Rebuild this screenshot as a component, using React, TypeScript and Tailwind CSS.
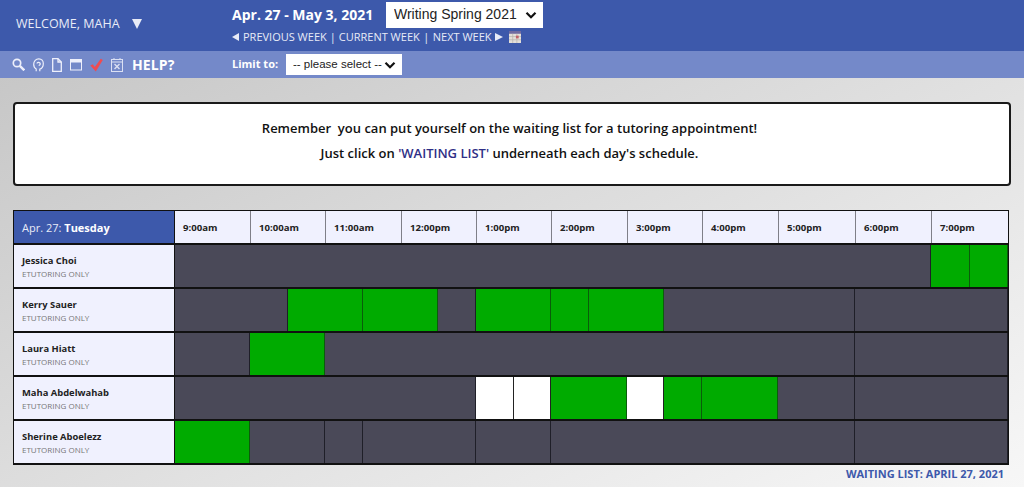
const F = "font-['Open_Sans',sans-serif]";

const gridCols = "grid grid-cols-[37px_38px_38px_37px_38px_38px_37px_38px_38px_37px_38px_38px_37px_38px_38px_38px_38px_39px_38px_38px_39px_38px]";
const D = "bg-[#4a4958] border-r border-[#1f1f28]";
const G = "bg-[#00ab00] border-r border-[#0b5c0b]";
const W = "bg-white border-r border-[#222]";

type Cell = [string, string];
const rows: { name: string; cells: Cell[] }[] = [
  { name: "Jessica Choi", cells: [["col-span-20", D], ["col-span-1", G], ["col-span-1", G]] },
  { name: "Kerry Sauer", cells: [["col-span-3", D], ["col-span-2", G], ["col-span-2", G], ["col-span-1", D], ["col-span-2", G], ["col-span-1", G], ["col-span-2", G], ["col-span-5", D], ["col-span-4", D]] },
  { name: "Laura Hiatt", cells: [["col-span-2", D], ["col-span-2", G], ["col-span-14", D], ["col-span-4", D]] },
  { name: "Maha Abdelwahab", cells: [["col-span-8", D], ["col-span-1", W], ["col-span-1", W], ["col-span-2", G], ["col-span-1", W], ["col-span-1", G], ["col-span-2", G], ["col-span-2", D], ["col-span-4", D]] },
  { name: "Sherine Aboelezz", cells: [["col-span-2", G], ["col-span-2", D], ["col-span-1", D], ["col-span-3", D], ["col-span-2", D], ["col-span-8", D], ["col-span-4", D]] },
];
const hours = ["9:00am", "10:00am", "11:00am", "12:00pm", "1:00pm", "2:00pm", "3:00pm", "4:00pm", "5:00pm", "6:00pm", "7:00pm"];
const hourW = ["w-[75px]", "w-[75px]", "w-[76px]", "w-[75px]", "w-[75px]", "w-[76px]", "w-[75px]", "w-[76px]", "w-[77px]", "w-[76px]", "w-[77px]"];

function Chevron({ size }: { size: number }) {
  return (
    <svg className="absolute right-[6px] top-1/2 -translate-y-1/2 pointer-events-none" width={size} height={size} viewBox="0 0 12 12" fill="none" stroke="#111" strokeWidth="2.200">
      <path d="M1.500 3.800L6 8.300l4.500-4.500" />
    </svg>
  );
}

function Icons() {
  return (
    <div className="flex items-center gap-[8px] w-[119px] text-[#eef0fb]">
      <svg width="13" height="13" viewBox="0 0 13 13" fill="none" stroke="currentColor" strokeWidth="1.700"><circle cx="5" cy="5" r="3.700" /><path d="M7.800 7.800l4.500 4.500" strokeWidth="2.400" /></svg>
      <svg width="11" height="14" viewBox="0 0 11 14" fill="none" stroke="currentColor" strokeWidth="1.200"><path d="M3.200 13.300v-2.300C1.500 10 .7 8.300.7 6.200.7 3 3 .8 5.800.8s4.500 2 4.500 4.800c0 3.200-2 5.200-3.500 5.600v2.100" /><path d="M4 5.500c0-1.200 2.800-1.700 3.200 0 .2 1-.6 1.800-1.500 1.800" /></svg>
      <svg width="10" height="14" viewBox="0 0 10 14" fill="none" stroke="currentColor" strokeWidth="1.300"><path d="M.7.7h5.300l3.300 3.300v9.300H.7z" /><path d="M6 .7V4h3.300" /></svg>
      <svg width="12" height="13" viewBox="0 0 12 13"><rect x=".5" y="1.500" width="11" height="10.500" fill="none" stroke="currentColor" /><rect x="0" y="1" width="12" height="3.500" fill="currentColor" /></svg>
      <svg width="13" height="14" viewBox="0 0 13 14"><path d="M.3 7.500l2.500-1.300 2 2.800L10.800.8l2 1.200-7 11.500z" fill="#f04b50" /></svg>
      <svg width="12" height="14" viewBox="0 0 12 14" fill="none" stroke="currentColor" strokeWidth="1" opacity="0.85"><rect x=".5" y="1.500" width="11" height="12" /><path d="M.5 4h11M3 0v2M9 0v2" /><path d="M3.500 6l5 5M8.500 6l-5 5" strokeWidth="1.400" /></svg>
    </div>
  );
}

export default function App() {
  return (
    <div className={`${F} w-[1024px] h-[487px] overflow-hidden bg-[linear-gradient(to_bottom_right,#c3c3c3,#f7f7f7)]`}>
      <header className="h-[51px] bg-[#3d59ab] flex text-white">
        <div className="w-[232px] pl-[16px] pt-[14px] flex items-start text-[12.5px] leading-[20px] text-[#e8ebf7]">
          <span>WELCOME, MAHA</span>
          <svg className="ml-[12px] mt-[5px]" width="10" height="10" viewBox="0 0 10 10"><path d="M0 0h10L5 10z" fill="#e8ebf7" /></svg>
        </div>
        <div className="flex flex-col">
          <div className="flex items-center h-[29px]">
            <span className="text-[14px] font-bold leading-[20px] w-[154px]">Apr. 27 - May 3, 2021</span>
            <div className="relative w-[157px] h-[26px]">
              <select className="block appearance-none font-['Liberation_Sans',sans-serif] bg-white text-[#222] text-[14px] w-full h-full pl-[8px] outline-none">
                <option>Writing Spring 2021</option>
              </select>
              <Chevron size={12} />
            </div>
          </div>
          <div className="flex items-center text-[11px] leading-[16px] text-[#e8ebf7] h-[16px]">
            <svg className="mr-[4px]" width="7" height="8" viewBox="0 0 7 8"><path d="M7 0v8L0 4z" fill="#e8ebf7" /></svg>
            <span>PREVIOUS WEEK</span>
            <span className="mx-[3px]">|</span>
            <span>CURRENT WEEK</span>
            <span className="mx-[3.5px]">|</span>
            <span>NEXT WEEK</span>
            <svg className="ml-[3px]" width="8" height="8" viewBox="0 0 8 8"><path d="M0 0v8l8-4z" fill="#e8ebf7" /></svg>
            <svg className="ml-[6px]" width="12" height="12" viewBox="0 0 13 13">
              <rect width="13" height="13" fill="#e3dfda" />
              <rect width="13" height="3" fill="#6f6aa0" />
              <path d="M0 6h13M0 9.500h13M4 3v10M8.500 3v10" stroke="#b5b0aa" strokeWidth="0.700" />
              <rect x="7.500" y="5" width="3" height="3" fill="#c4626a" />
            </svg>
          </div>
        </div>
      </header>
      <div className="h-[27px] bg-[#7489c9] flex items-center text-white">
        <div className="w-[232px] flex items-center pl-[12px]">
          <Icons />
          <span className="text-[14px] font-bold leading-[20px] tracking-[0.1px] ml-[1px]">HELP?</span>
        </div>
        <span className="text-[11px] font-bold w-[54px]">Limit to:</span>
        <div className="relative w-[116px] h-[21px]">
          <select className="block appearance-none font-['Liberation_Sans',sans-serif] bg-white text-[#222] text-[11.5px] w-full h-full pl-[7px] outline-none">
            <option>-- please select --</option>
          </select>
          <Chevron size={12} />
        </div>
      </div>
      <main className="px-[13px] pt-[24px]">
        <div className="h-[84px] bg-white border-2 border-[#1a1a1a] rounded-[4px] flex flex-col items-center justify-center gap-[7px] pb-[8px] pr-[5px] text-[13px] font-semibold leading-[18px] text-[#111]">
          <p>Remember&nbsp; you can put yourself on the waiting list for a tutoring appointment!</p>
          <p>Just click on <span className="text-[#2f2f86]">'WAITING LIST'</span> underneath each day's schedule.</p>
        </div>
        <div className="mt-[24px] w-[996px] border-x border-b-2 border-t border-[#111] bg-[#111]">
          <div className="flex h-[32px] bg-[#f0f1fe]">
            <div className="w-[161px] bg-[#3d59ab] border-r border-[#111] text-[#e8ebf7] text-[11px] flex items-center pl-[8px] pt-[2px]">
              Apr. 27:&nbsp;<b className="text-white">Tuesday</b>
            </div>
            {hours.map((h, i) => (
              <div key={h} className={`${hourW[i]} pt-[2px] flex items-center text-[9.6px] font-bold text-[#222] ${i === 0 ? "pl-[8px]" : "pl-[8px] border-l border-[#7f7f88]"}`}>{h}</div>
            ))}
          </div>
          {rows.map((r) => (
            <div key={r.name} className="flex h-[44px] border-t-2 border-[#111]">
              <div className="w-[161px] bg-[#f0f1fe] border-r border-[#111] pl-[8px] pt-[1px] flex flex-col justify-center">
                <div className="text-[9.4px] font-bold leading-[14px] text-[#222]">{r.name}</div>
                <div className="text-[8px] leading-[11px] text-[#777]">ETUTORING ONLY</div>
              </div>
              <div className={`${gridCols} h-full`}>
                {r.cells.map(([span, c], j) => (
                  <div key={j} className={`${span} ${c}`} />
                ))}
              </div>
            </div>
          ))}
        </div>
        <div className="text-right pr-[7px] mt-[1px] text-[11px] font-bold leading-[16px] text-[#3d59ab]">WAITING LIST: APRIL 27, 2021</div>
      </main>
    </div>
  );
}
